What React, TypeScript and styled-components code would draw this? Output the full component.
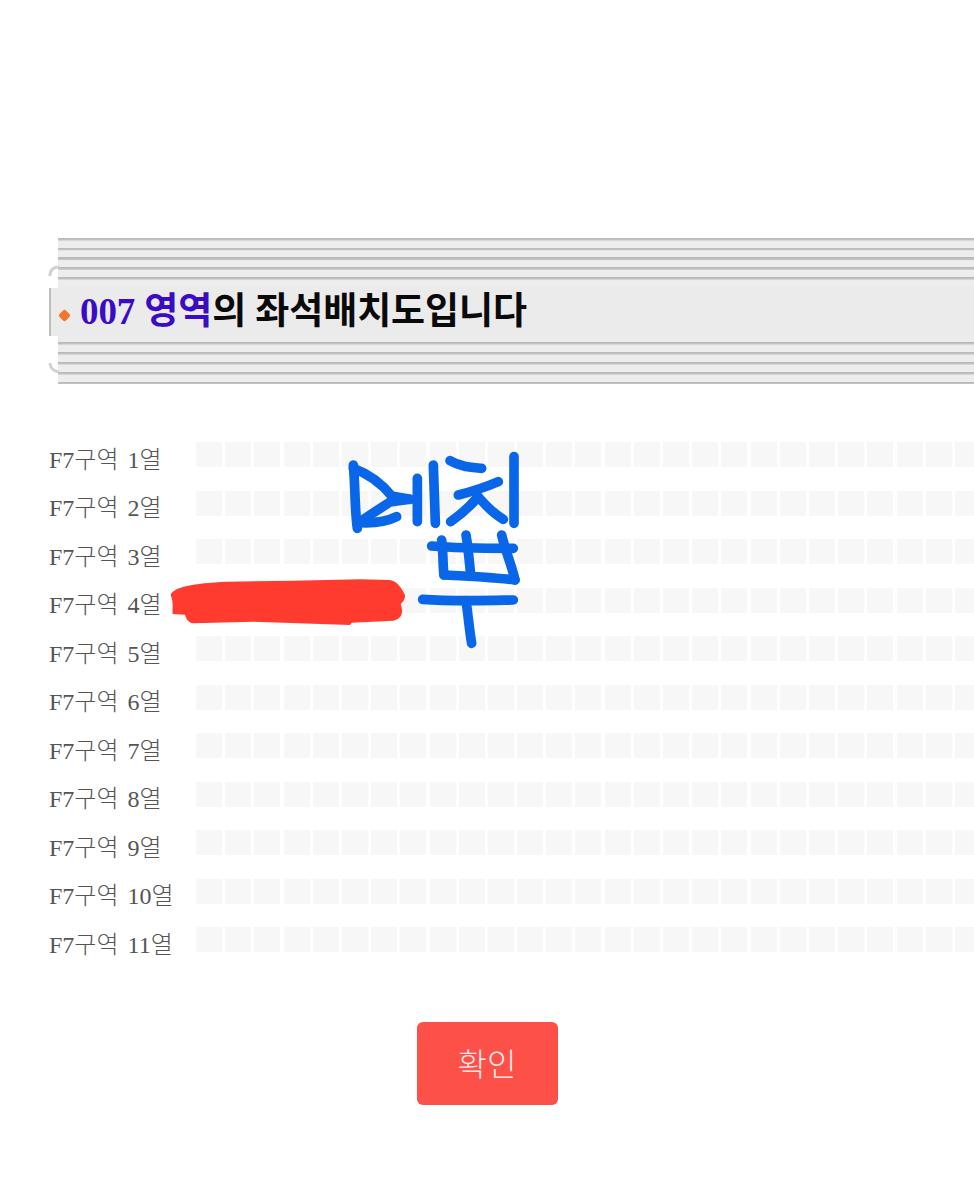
import React from 'react';
import styled, { createGlobalStyle } from 'styled-components';

const Global = createGlobalStyle`
  html, body { margin: 0; padding: 0; background: #fff; }
`;

const Page = styled.div`
  position: relative;
  width: 974px;
  height: 1200px;
  overflow: hidden;
  padding-top: 238px;
  box-sizing: border-box;
  font-family: "Liberation Serif", "Noto Sans CJK KR", serif;
`;

const Banner = styled.header`
  position: relative;
  display: flex;
  flex-direction: column;
  padding-left: 58px;
  height: 146px;
`;

const Stripes = styled.div<{ $pitch: number; $height: number }>`
  height: ${p => p.$height}px;
  flex: none;
  background: repeating-linear-gradient(
    to bottom,
    #b8b8b8 0,
    #c2c2c2 2px,
    #ededed 3px,
    #ededed ${p => p.$pitch}px
  );
`;

const TitleBar = styled.div`
  position: relative;
  flex: 1;
  display: flex;
  align-items: center;
  gap: 11px;
  padding-bottom: 5px;
  background: #ebebeb;

  &::before {
    content: '';
    position: absolute;
    left: -9px;
    top: 2px;
    width: 7px;
    height: 48px;
    background: #ebebeb;
    border-left: 2px solid #bdbdbd;
  }
`;

const Bullet = styled.span`
  width: 9px;
  height: 9px;
  flex: none;
  margin-top: 7px;
  margin-left: 2px;
  background: #f0772c;
  transform: rotate(45deg);
  border-radius: 2px;
`;

const Title = styled.h1`
  margin: 0;
  font-size: 37px;
  line-height: 44px;
  font-weight: 700;
  color: #0a0a0a;
  letter-spacing: -0.1px;
  white-space: nowrap;
`;

const Accent = styled.span`
  color: #3a0cc4;
`;

const Cap = styled.svg<{ $top: number }>`
  position: absolute;
  left: 48px;
  top: ${p => p.$top}px;
`;

const Rows = styled.section`
  margin-top: 58px;
  display: flex;
  flex-direction: column;
  gap: 23.5px;
  padding-left: 49px;
`;

const Row = styled.div`
  display: flex;
  align-items: center;
  height: 25px;
`;

const RowLabel = styled.span`
  width: 147px;
  flex: none;
  margin-top: 11px;
  font-size: 24px;
  line-height: 25px;
  font-weight: 300;
  word-spacing: 3px;
  color: #555;
  white-space: nowrap;
`;

const Seats = styled.div`
  display: flex;
  gap: 3.2px;
`;

const Seat = styled.span`
  width: 26px;
  height: 25px;
  flex: none;
  background: #f7f7f7;
`;

const Footer = styled.div`
  display: flex;
  justify-content: center;
  margin-top: 70px;
`;

const Confirm = styled.button`
  width: 141px;
  height: 83px;
  border: none;
  border-radius: 6px;
  background: #fc5048;
  color: #fbe9e7;
  font-family: "Noto Sans CJK KR", sans-serif;
  font-size: 32px;
  font-weight: 300;
  padding: 0 0 4px;
`;

const Scribble = styled.svg`
  position: absolute;
  left: 160px;
  top: 440px;
`;

const rows = ['1', '2', '3', '4', '5', '6', '7', '8', '9', '10', '11'];
const seats = Array.from({ length: 27 }, (_, i) => i);

const bluePaths = [
  'M580 75 C586 140 584 210 592 265',
  'M580 85 C620 100 660 125 695 168 L750 178',
  'M750 178 L690 186 C660 205 630 225 605 242',
  'M600 248 C640 250 680 245 710 230',
  'M772 115 L772 245',
  'M820 75 L826 250',
  'M870 62 C900 80 930 82 965 85',
  'M895 165 C935 155 980 140 1015 125',
  'M950 165 C975 195 1000 220 1030 238',
  'M950 175 C925 205 900 225 872 245',
  'M1062 50 L1062 250',
  'M815 318 C900 325 980 325 1060 325',
  'M845 300 C850 340 848 375 852 405',
  'M918 285 C925 325 928 365 932 405',
  'M1025 285 C1035 330 1055 375 1065 420',
  'M852 405 C920 408 1000 412 1065 420',
  'M788 478 C880 485 970 482 1060 480',
  'M918 482 C925 530 928 570 935 610',
];

export default function App() {
  return (
    <Page>
      <Global />
      <Banner>
        <Stripes $pitch={9.75} $height={48} />
        <TitleBar>
          <Bullet />
          <Title>
            <Accent>007 영역</Accent>의 좌석배치도입니다
          </Title>
        </TitleBar>
        <Stripes $pitch={10} $height={42} />
        <Cap $top={27} width="12" height="12" viewBox="0 0 12 12">
          <path d="M2 11 C2 5 5 2 11 2" fill="none" stroke="#d2d2d2" strokeWidth="3" />
        </Cap>
        <Cap $top={124} width="12" height="12" viewBox="0 0 12 12">
          <path d="M2 1 C2 5 5 9 11 10" fill="none" stroke="#d2d2d2" strokeWidth="3" />
        </Cap>
      </Banner>
      <Rows>
        {rows.map(r => (
          <Row key={r}>
            <RowLabel>F7구역 {r}열</RowLabel>
            <Seats>
              {seats.map(s => (
                <Seat key={s} />
              ))}
            </Seats>
          </Row>
        ))}
      </Rows>
      <Footer>
        <Confirm>확인</Confirm>
      </Footer>
      <Scribble width="380" height="220" viewBox="0 0 1140 660">
        <path
          d="M32 465 C40 440 100 430 200 425 L400 422 L600 418 L690 420 C712 425 722 440 735 465 C736 480 726 488 722 492 C730 515 728 535 700 542 L575 548 L570 555 L280 545 L100 550 C84 548 78 535 75 524 L38 522 C36 505 42 490 32 465 Z"
          fill="#ff3b30"
        />
        {bluePaths.map(d => (
          <path key={d} d={d} fill="none" stroke="#0a66e8" strokeWidth="29" strokeLinecap="round" strokeLinejoin="round" />
        ))}
      </Scribble>
    </Page>
  );
}
